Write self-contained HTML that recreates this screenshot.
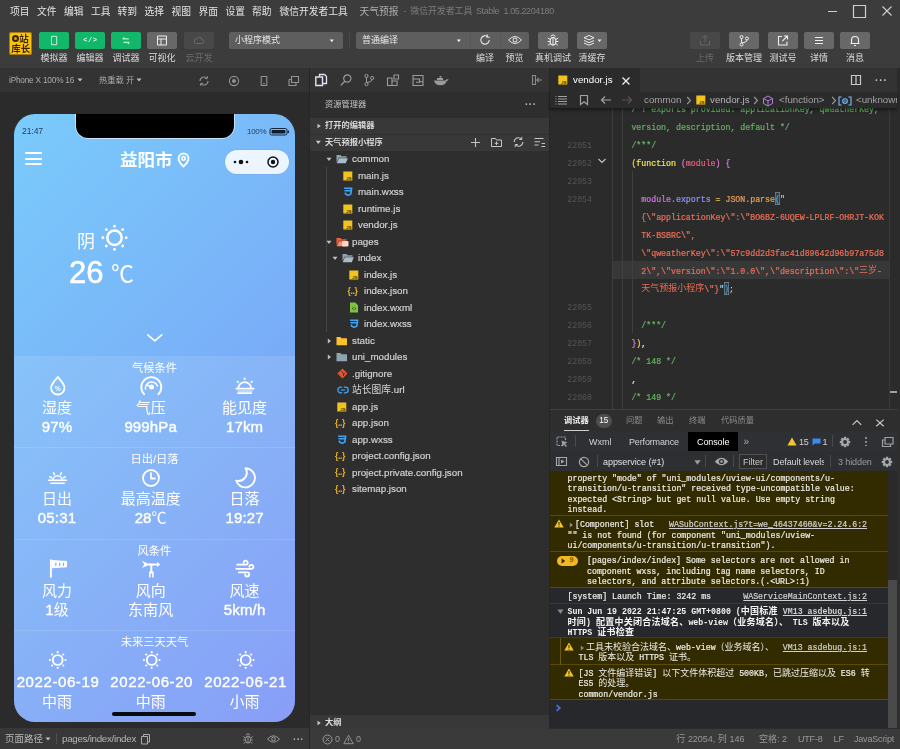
<!DOCTYPE html>
<html lang="zh"><head><meta charset="utf-8"><title>微信开发者工具</title><style>
html,body{margin:0;padding:0;}
body{width:900px;height:749px;overflow:hidden;background:#2b2b2b;font-family:"Liberation Sans","Noto Sans CJK SC",sans-serif;font-kerning:none;position:relative;}
#r{position:absolute;left:0;top:0;width:900px;height:749px;overflow:hidden;will-change:transform;}
#r div,#r span,#r svg{position:absolute;}
#r span{white-space:pre;}
#r span.h{font-family:"Liberation Sans","Noto Sans CJK SC",sans-serif;}
#r div.c{overflow:hidden;}
</style></head>
<body><div id="r">
<div style="left:0px;top:0px;width:900px;height:68px;background:#3c3c3c;"></div>
<span class="h" style="left:10.00px;top:4.58px;font-size:9.75px;line-height:13.65px;color:#e4e4e4;">项目</span>
<span class="h" style="left:37.00px;top:4.58px;font-size:9.75px;line-height:13.65px;color:#e4e4e4;">文件</span>
<span class="h" style="left:64.00px;top:4.58px;font-size:9.75px;line-height:13.65px;color:#e4e4e4;">编辑</span>
<span class="h" style="left:91.00px;top:4.58px;font-size:9.75px;line-height:13.65px;color:#e4e4e4;">工具</span>
<span class="h" style="left:117.50px;top:4.58px;font-size:9.75px;line-height:13.65px;color:#e4e4e4;">转到</span>
<span class="h" style="left:144.50px;top:4.58px;font-size:9.75px;line-height:13.65px;color:#e4e4e4;">选择</span>
<span class="h" style="left:171.50px;top:4.58px;font-size:9.75px;line-height:13.65px;color:#e4e4e4;">视图</span>
<span class="h" style="left:198.50px;top:4.58px;font-size:9.75px;line-height:13.65px;color:#e4e4e4;">界面</span>
<span class="h" style="left:225.50px;top:4.58px;font-size:9.75px;line-height:13.65px;color:#e4e4e4;">设置</span>
<span class="h" style="left:252.00px;top:4.58px;font-size:9.75px;line-height:13.65px;color:#e4e4e4;">帮助</span>
<span class="h" style="left:279.50px;top:4.58px;font-size:9.75px;line-height:13.65px;color:#e4e4e4;">微信开发者工具</span>
<span class="h" style="left:359.50px;top:4.58px;font-size:9.75px;line-height:13.65px;color:#adadad;">天气预报</span>
<span style="left:403.50px;top:5.10px;font-size:9px;line-height:12.6px;color:#7c7c7c;">-</span>
<span class="h" style="left:410.30px;top:5.10px;font-size:9px;line-height:12.6px;color:#7c7c7c;letter-spacing:-0.15px;">微信开发者工具</span>
<span style="left:476.00px;top:5.10px;font-size:9px;line-height:12.6px;color:#7c7c7c;letter-spacing:-0.4px;">Stable</span>
<span style="left:503.50px;top:5.10px;font-size:9px;line-height:12.6px;color:#7c7c7c;letter-spacing:-0.4px;">1.05.2204180</span>
<svg style="left:826px;top:4px;" width="70" height="16" viewBox="0 0 70 16"><path d="M2 7.5H11" stroke="#d0d0d0" stroke-width="1" fill="none" /><path d="M27.5 1.5H39.5V13.5H27.5Z" stroke="#d0d0d0" stroke-width="1.2" fill="none" /><path d="M56.5 2.5L65.5 11.5M65.5 2.5L56.5 11.5" stroke="#d0d0d0" stroke-width="1.1" fill="none" /></svg>
<div style="left:9px;top:32px;width:23px;height:23px;background:#fcc30b;border-radius:3px;box-shadow:0 0 0 1px #a87a08 inset;"></div>
<div style="left:11.8px;top:34.8px;width:7.4px;height:7.4px;background:#3a2400;border-radius:4px;"></div>
<div style="left:13.7px;top:36.7px;width:3.6px;height:3.6px;background:#d8a010;border-radius:2px;"></div>
<span class="h" style="left:19.30px;top:32.05px;font-size:9.5px;line-height:13.3px;color:#3a2400;font-weight:700;">站</span>
<span class="h" style="left:11.30px;top:41.65px;font-size:9.5px;line-height:13.3px;color:#3a2400;font-weight:700;">库长</span>
<div style="left:39px;top:32px;width:30px;height:16.5px;background:#12b76a;border-radius:2px;"></div>
<span class="h" style="left:40.50px;top:51.70px;font-size:9px;line-height:12.6px;color:#dcdcdc;">模拟器</span>
<div style="left:75px;top:32px;width:30px;height:16.5px;background:#12b76a;border-radius:2px;"></div>
<span class="h" style="left:76.50px;top:51.70px;font-size:9px;line-height:12.6px;color:#dcdcdc;">编辑器</span>
<div style="left:111px;top:32px;width:30px;height:16.5px;background:#12b76a;border-radius:2px;"></div>
<span class="h" style="left:112.50px;top:51.70px;font-size:9px;line-height:12.6px;color:#dcdcdc;">调试器</span>
<div style="left:147px;top:32px;width:30px;height:16.5px;background:#686868;border-radius:2px;"></div>
<span class="h" style="left:148.50px;top:51.70px;font-size:9px;line-height:12.6px;color:#dcdcdc;">可视化</span>
<div style="left:184px;top:32px;width:30px;height:16.5px;background:#484848;border-radius:2px;"></div>
<span class="h" style="left:185.50px;top:51.70px;font-size:9px;line-height:12.6px;color:#6a6a6a;">云开发</span>
<svg style="left:39px;top:32px;" width="30" height="17" viewBox="0 0 30 17"><path d="M12.500 4.300h5.200v8.400h-5.200z" stroke="#d8f8e8" stroke-width="0.9" fill="none" stroke-linejoin="round"/></svg>
<span style="left:83.25px;top:36.40px;font-size:7px;line-height:9.8px;color:#d8f8e8;font-family:'Liberation Mono',monospace;font-weight:700;letter-spacing:0.5px;">&lt;/&gt;</span>
<svg style="left:111px;top:32px;" width="30" height="17" viewBox="0 0 30 17"><path d="M17.800 6.900h-6M13.300 5.300l-1.600 1.600M12.300 10.400h6M16.800 12l1.600-1.600" stroke="#b4f0d2" stroke-width="1.2" fill="none" /></svg>
<svg style="left:147px;top:32px;" width="30" height="17" viewBox="0 0 30 17"><path d="M10.5 4h9v9h-9zM10.5 7h9M14 7v6" stroke="#eee" stroke-width="1" fill="none" /></svg>
<svg style="left:184px;top:32px;" width="30" height="17" viewBox="0 0 30 17"><path d="M12.5 11.5a2.3 2.3 0 0 1 .3-4.6a2.6 2.6 0 0 1 5 .6a2 2 0 0 1 -.3 4z" stroke="#6a6a6a" stroke-width="1" fill="none" /></svg>
<div style="left:229px;top:32px;width:114px;height:16.5px;background:#5e5e5e;border-radius:2px;"></div>
<span class="h" style="left:235.00px;top:34.20px;font-size:9px;line-height:12.6px;color:#e8e8e8;">小程序模式</span>
<svg style="left:329px;top:38.5px;" width="6" height="4" viewBox="0 0 6 4"><path d="M.8 .6h4l-2 2.600z" fill="#eee"/></svg>
<div style="left:349px;top:33px;width:1px;height:15px;background:#4a4a4a;"></div>
<div style="left:356px;top:32px;width:173px;height:16.5px;background:#5e5e5e;border-radius:2px;"></div>
<span class="h" style="left:362.00px;top:34.20px;font-size:9px;line-height:12.6px;color:#e8e8e8;">普通编译</span>
<svg style="left:456px;top:38.5px;" width="6" height="4" viewBox="0 0 6 4"><path d="M.8 .6h4l-2 2.600z" fill="#eee"/></svg>
<div style="left:470px;top:32px;width:1px;height:16.5px;background:#585858;"></div>
<div style="left:499.5px;top:32px;width:1px;height:16.5px;background:#585858;"></div>
<svg style="left:478px;top:33px;" width="14" height="14" viewBox="0 0 14 14"><path d="M11.2 7a4.2 4.2 0 1 1 -1.5 -3.2" stroke="#e6e6e6" stroke-width="1.1" fill="none" /><path d="M9.2 1.6v2.6h2.6" stroke="#e6e6e6" stroke-width="1.1" fill="none" /></svg>
<svg style="left:507px;top:34px;" width="16" height="12" viewBox="0 0 16 12"><path d="M1.5 6q6.5 -7 13 0q-6.5 7 -13 0z" stroke="#e6e6e6" stroke-width="1" fill="none" /><circle cx="8" cy="6" r="2" fill="none" stroke="#e6e6e6"/></svg>
<span class="h" style="left:476.00px;top:51.70px;font-size:9px;line-height:12.6px;color:#dcdcdc;">编译</span>
<span class="h" style="left:505.50px;top:51.70px;font-size:9px;line-height:12.6px;color:#dcdcdc;">预览</span>
<div style="left:538px;top:32px;width:30px;height:16.5px;background:#686868;border-radius:2px;"></div>
<svg style="left:545px;top:33px;" width="16" height="15" viewBox="0 0 16 15"><ellipse cx="8" cy="8.3" rx="2.8" ry="3.8" fill="none" stroke="#eee" stroke-width="1.1"/><path d="M8 4.5v7.6M6 3.6a2 1.6 0 0 1 4 0M5.2 6.5l-2.4-1.5M10.8 6.5l2.4-1.5M5.2 8.5h-2.6M10.8 8.5h2.6M5.4 10.5l-2.3 1.7M10.6 10.5l2.3 1.7" stroke="#eee" stroke-width="1" fill="none" /></svg>
<span class="h" style="left:535.00px;top:51.70px;font-size:9px;line-height:12.6px;color:#dcdcdc;">真机调试</span>
<div style="left:577px;top:32px;width:30px;height:16.5px;background:#686868;border-radius:2px;"></div>
<svg style="left:580px;top:33px;" width="26" height="15" viewBox="0 0 26 15"><path d="M9 2.5l5 2.2l-5 2.2l-5-2.2zM4 7.5l5 2.2l5-2.2M4 10l5 2.2l5-2.2" stroke="#eee" stroke-width="1" fill="none" /><path d="M17.5 6.5h4l-2 2.5z" fill="#eee"/></svg>
<span class="h" style="left:578.50px;top:51.70px;font-size:9px;line-height:12.6px;color:#dcdcdc;">清缓存</span>
<div style="left:690px;top:32px;width:30px;height:16.5px;background:#484848;border-radius:2px;"></div>
<svg style="left:697px;top:33px;" width="16" height="15" viewBox="0 0 16 15"><path d="M8 2.5v7M5.5 5l2.5-2.5l2.5 2.5M3.5 8v4h9v-4" stroke="#666" stroke-width="1" fill="none" /></svg>
<span class="h" style="left:696.00px;top:51.70px;font-size:9px;line-height:12.6px;color:#666;">上传</span>
<div style="left:729px;top:32px;width:30px;height:16.5px;background:#686868;border-radius:2px;"></div>
<svg style="left:736px;top:33px;" width="16" height="15" viewBox="0 0 16 15"><circle cx="5.5" cy="4" r="1.5" fill="none" stroke="#eee"/><circle cx="5.5" cy="11.5" r="1.5" fill="none" stroke="#eee"/><circle cx="11" cy="5.5" r="1.5" fill="none" stroke="#eee"/><path d="M5.5 5.5v4.5M11 7q0 2.5-5 3" stroke="#eee" stroke-width="1" fill="none" /></svg>
<span class="h" style="left:726.00px;top:51.70px;font-size:9px;line-height:12.6px;color:#dcdcdc;">版本管理</span>
<div style="left:768px;top:32px;width:30px;height:16.5px;background:#686868;border-radius:2px;"></div>
<svg style="left:775px;top:33px;" width="16" height="15" viewBox="0 0 16 15"><path d="M7 3.5h-3.500v8.500h8.500v-3.500M9 3h3.500v3.500M12.300 3.200l-5 5" stroke="#eee" stroke-width="1.1" fill="none" /></svg>
<span class="h" style="left:769.50px;top:51.70px;font-size:9px;line-height:12.6px;color:#dcdcdc;">测试号</span>
<div style="left:804px;top:32px;width:30px;height:16.5px;background:#686868;border-radius:2px;"></div>
<svg style="left:811px;top:33px;" width="16" height="15" viewBox="0 0 16 15"><path d="M4 4.5h8M4 7.5h8M4 10.5h8" stroke="#eee" stroke-width="1.2" fill="none" /></svg>
<span class="h" style="left:810.00px;top:51.70px;font-size:9px;line-height:12.6px;color:#dcdcdc;">详情</span>
<div style="left:840px;top:32px;width:30px;height:16.5px;background:#686868;border-radius:2px;"></div>
<svg style="left:847px;top:33px;" width="16" height="15" viewBox="0 0 16 15"><path d="M4.5 10.5v-3.500a3.500 3.500 0 0 1 7 0v3.500zM3.500 10.500h9M7 12.500h2" stroke="#eee" stroke-width="1.1" fill="none" /></svg>
<span class="h" style="left:846.00px;top:51.70px;font-size:9px;line-height:12.6px;color:#dcdcdc;">消息</span>
<div style="left:0px;top:68px;width:309px;height:24px;background:#333333;"></div>
<div style="left:0px;top:92px;width:309px;height:636px;background:#2b2b2b;"></div>
<div style="left:309px;top:68px;width:1px;height:681px;background:#262626;"></div>
<span style="left:9.00px;top:75.02px;font-size:8.25px;line-height:11.55px;color:#ababab;letter-spacing:-0.2px;">iPhone X 100% 16</span>
<svg style="left:77px;top:78px;" width="6" height="4" viewBox="0 0 6 4"><path d="M.5 .5h5l-2.5 3z" fill="#bdbdbd"/></svg>
<span class="h" style="left:99.00px;top:74.52px;font-size:8.25px;line-height:11.55px;color:#ababab;">热重载</span>
<span style="left:123.75px;top:74.52px;font-size:8.25px;line-height:11.55px;color:#ababab;"> </span>
<span class="h" style="left:126.04px;top:74.52px;font-size:8.25px;line-height:11.55px;color:#ababab;">开</span>
<svg style="left:136px;top:78px;" width="6" height="4" viewBox="0 0 6 4"><path d="M.5 .5h5l-2.5 3z" fill="#bdbdbd"/></svg>
<svg style="left:198px;top:74.7px;" width="12" height="12" viewBox="0 0 12 12"><path d="M2 6a4 4 0 0 1 7-2.6M10 6a4 4 0 0 1 -7 2.6" stroke="#929292" stroke-width="1.1" fill="none" /><path d="M9.3 1.2v2.4h-2.4M2.7 10.8v-2.4h2.4" stroke="#929292" stroke-width="1" fill="none" /></svg>
<svg style="left:228px;top:74.7px;" width="12" height="12" viewBox="0 0 12 12"><circle cx="6" cy="6" r="4.6" fill="none" stroke="#929292" stroke-width="1.1"/><circle cx="6" cy="6" r="2" fill="#929292"/></svg>
<svg style="left:258px;top:74.7px;" width="12" height="12" viewBox="0 0 12 12"><path d="M3.2 1.5h5.6v9h-5.6zM5 8.8h2" stroke="#929292" stroke-width="1.1" fill="none" stroke-linejoin="round"/></svg>
<svg style="left:287px;top:74.7px;" width="14" height="12" viewBox="0 0 14 12"><path d="M4.5 1.5h7v6h-7zM2 4.5h2.5M2 4.5v6h7v-3" stroke="#929292" stroke-width="1.1" fill="none" /></svg>
<div class="c" id="ph" style="left:14px;top:114px;width:281px;height:608px;border-radius:21px;background:linear-gradient(135deg,#7acbfb 0%,#79b0f8 50%,#7a92f6 100%);"><div style="left:0;top:242px;width:281px;height:366px;background:rgba(255,255,255,0.11)"></div><div style="left:0;top:333.3px;width:281px;height:1px;background:rgba(255,255,255,0.13)"></div><div style="left:0;top:424.79999999999995px;width:281px;height:1px;background:rgba(255,255,255,0.13)"></div><div style="left:0;top:516.3px;width:281px;height:1px;background:rgba(255,255,255,0.13)"></div><div style="left:62px;top:-10px;width:157.500px;height:33.700px;background:#000;border-radius:0 0 12px 12px;box-shadow:0 0 0 .7px rgba(255,255,255,.75)"></div></div>
<span style="left:22.00px;top:124.98px;font-size:8.6px;line-height:12.04px;color:#1d3d5c;letter-spacing:-0.1px;">21:47</span>
<span style="left:247.00px;top:125.90px;font-size:8px;line-height:11.2px;color:#1d3d5c;letter-spacing:-0.3px;">100%</span>
<svg style="left:269px;top:127px;" width="22" height="10" viewBox="0 0 22 10"><rect x="1" y="1.5" width="17" height="6.5" rx="1.6" fill="none" stroke="#14283c" stroke-width="1"/><rect x="2.6" y="3.1" width="13.8" height="3.3" rx=".6" fill="#101c2c"/><rect x="18.6" y="3.6" width="1.4" height="2.4" fill="#14283c"/></svg>
<div style="left:25px;top:152.0px;width:17px;height:2px;background:#fff;border-radius:1px;"></div>
<div style="left:25px;top:157.5px;width:17px;height:2px;background:#fff;border-radius:1px;"></div>
<div style="left:25px;top:163.0px;width:17px;height:2px;background:#fff;border-radius:1px;"></div>
<span class="h" style="left:120.00px;top:147.75px;font-size:17.5px;line-height:24.5px;color:#fff;font-weight:700;">益阳市</span>
<svg style="left:175.5px;top:152px;" width="16" height="17" viewBox="0 0 16 17"><g transform="scale(1.12) translate(-.3 -.2)"><path d="M7 1.5a4.4 4.4 0 0 0 -4.4 4.4c0 3 4.4 7.2 4.4 7.2s4.4-4.2 4.4-7.2a4.400 4.400 0 0 0 -4.400-4.400z" fill="none" stroke="#fff" stroke-opacity=".95" stroke-width="1.700"/><circle cx="7" cy="5.900" r="1.500" fill="none" stroke="#fff" stroke-opacity=".95" stroke-width="1.500"/></g></svg>
<div style="left:225px;top:150px;width:64px;height:23.5px;background:rgba(255,255,255,0.86);border-radius:12px;box-shadow:0 0 0 .5px rgba(120,140,180,.35);"></div>
<svg style="left:231px;top:156px;" width="22" height="12" viewBox="0 0 22 12"><circle cx="4" cy="6" r="1.3" fill="#111"/><circle cx="10" cy="6" r="2.3" fill="#111"/><circle cx="16" cy="6" r="1.3" fill="#111"/></svg>
<svg style="left:266px;top:155px;" width="14" height="14" viewBox="0 0 14 14"><circle cx="7" cy="7" r="5" fill="none" stroke="#111" stroke-width="1.5"/><circle cx="7" cy="7" r="2.200" fill="#111"/></svg>
<span class="h" style="left:77.00px;top:229.90px;font-size:18px;line-height:25.2px;color:#fff;">阴</span>
<svg style="left:100px;top:223px;" width="28" height="28" viewBox="0 0 28 28"><circle cx="14.5" cy="14.8" r="7.2" fill="none" stroke="#fff" stroke-width="2.5"/><circle cx="26.10" cy="14.80" r="1.45" fill="#fff"/><circle cx="22.70" cy="23.00" r="1.45" fill="#fff"/><circle cx="14.50" cy="26.40" r="1.45" fill="#fff"/><circle cx="6.30" cy="23.00" r="1.45" fill="#fff"/><circle cx="2.90" cy="14.80" r="1.45" fill="#fff"/><circle cx="6.30" cy="6.60" r="1.45" fill="#fff"/><circle cx="14.50" cy="3.20" r="1.45" fill="#fff"/><circle cx="22.70" cy="6.60" r="1.45" fill="#fff"/></svg>
<span style="left:69.00px;top:251.30px;font-size:31px;line-height:43.4px;color:#fff;-webkit-text-stroke:.55px #fff;">26</span>
<span class="h" style="left:111.00px;top:257.90px;font-size:23px;line-height:32.2px;color:#fff;">℃</span>
<svg style="left:146px;top:333px;" width="18" height="10" viewBox="0 0 18 10"><path d="M1.800 1.800l7 6l7-6" stroke="#fff" stroke-width="1.7" fill="none" stroke-linecap="round" stroke-linejoin="round"/></svg>
<span class="h" style="left:132.00px;top:360.73px;font-size:11.25px;line-height:15.75px;color:#fff;">气候条件</span>
<span class="h" style="left:42.00px;top:396.50px;font-size:15px;line-height:21.0px;color:#fff;">湿度</span>
<span style="left:41.76px;top:415.80px;font-size:15px;line-height:21.0px;color:#fff;letter-spacing:0.15px;-webkit-text-stroke:.4px #fff;">97%</span>
<span class="h" style="left:135.70px;top:396.50px;font-size:15px;line-height:21.0px;color:#fff;">气压</span>
<span style="left:124.39px;top:415.80px;font-size:15px;line-height:21.0px;color:#fff;letter-spacing:0.15px;-webkit-text-stroke:.4px #fff;">999hPa</span>
<span class="h" style="left:222.10px;top:396.50px;font-size:15px;line-height:21.0px;color:#fff;">能见度</span>
<span style="left:225.96px;top:415.80px;font-size:15px;line-height:21.0px;color:#fff;letter-spacing:0.15px;-webkit-text-stroke:.4px #fff;">17km</span>
<span class="h" style="left:130.44px;top:452.23px;font-size:11.25px;line-height:15.75px;color:#fff;">日出</span>
<span style="left:152.94px;top:452.23px;font-size:11.25px;line-height:15.75px;color:#fff;">/</span>
<span class="h" style="left:156.06px;top:452.23px;font-size:11.25px;line-height:15.75px;color:#fff;">日落</span>
<span class="h" style="left:42.00px;top:488.00px;font-size:15px;line-height:21.0px;color:#fff;">日出</span>
<span style="left:37.86px;top:507.30px;font-size:15px;line-height:21.0px;color:#fff;letter-spacing:0.15px;-webkit-text-stroke:.4px #fff;">05:31</span>
<span class="h" style="left:120.70px;top:488.00px;font-size:15px;line-height:21.0px;color:#fff;">最高温度</span>
<span style="left:134.63px;top:507.30px;font-size:15px;line-height:21.0px;color:#fff;letter-spacing:0.15px;-webkit-text-stroke:.4px #fff;">28</span>
<span class="h" style="left:151.62px;top:507.30px;font-size:15px;line-height:21.0px;color:#fff;">℃</span>
<span class="h" style="left:229.60px;top:488.00px;font-size:15px;line-height:21.0px;color:#fff;">日落</span>
<span style="left:225.46px;top:507.30px;font-size:15px;line-height:21.0px;color:#fff;letter-spacing:0.15px;-webkit-text-stroke:.4px #fff;">19:27</span>
<span class="h" style="left:137.62px;top:543.73px;font-size:11.25px;line-height:15.75px;color:#fff;">风条件</span>
<span class="h" style="left:42.00px;top:579.50px;font-size:15px;line-height:21.0px;color:#fff;">风力</span>
<span style="left:45.18px;top:598.80px;font-size:15px;line-height:21.0px;color:#fff;letter-spacing:0.15px;-webkit-text-stroke:.4px #fff;">1</span>
<span class="h" style="left:53.67px;top:598.80px;font-size:15px;line-height:21.0px;color:#fff;">级</span>
<span class="h" style="left:135.70px;top:579.50px;font-size:15px;line-height:21.0px;color:#fff;">风向</span>
<span class="h" style="left:127.97px;top:598.80px;font-size:15px;line-height:21.0px;color:#fff;letter-spacing:0.15px;">东南风</span>
<span class="h" style="left:229.60px;top:579.50px;font-size:15px;line-height:21.0px;color:#fff;">风速</span>
<span style="left:223.80px;top:598.80px;font-size:15px;line-height:21.0px;color:#fff;letter-spacing:0.15px;-webkit-text-stroke:.4px #fff;">5km/h</span>
<span class="h" style="left:120.75px;top:635.12px;font-size:11.25px;line-height:15.75px;color:#fff;">未来三天天气</span>
<span style="left:16.64px;top:670.50px;font-size:15px;line-height:21.0px;color:#fff;letter-spacing:0.6px;-webkit-text-stroke:.4px #fff;">2022-06-19</span>
<span class="h" style="left:42.00px;top:691.00px;font-size:15px;line-height:21.0px;color:#fff;">中雨</span>
<svg style="left:47px;top:650px;" width="20" height="20" viewBox="0 0 20 20"><circle cx="10.7" cy="10" r="4.9" fill="none" stroke="#fff" stroke-width="1.9"/><circle cx="18.50" cy="10.00" r="1.1" fill="#fff"/><circle cx="16.22" cy="15.52" r="1.1" fill="#fff"/><circle cx="10.70" cy="17.80" r="1.1" fill="#fff"/><circle cx="5.18" cy="15.52" r="1.1" fill="#fff"/><circle cx="2.90" cy="10.00" r="1.1" fill="#fff"/><circle cx="5.18" cy="4.48" r="1.1" fill="#fff"/><circle cx="10.70" cy="2.20" r="1.1" fill="#fff"/><circle cx="16.22" cy="4.48" r="1.1" fill="#fff"/></svg>
<span style="left:110.34px;top:670.50px;font-size:15px;line-height:21.0px;color:#fff;letter-spacing:0.6px;-webkit-text-stroke:.4px #fff;">2022-06-20</span>
<span class="h" style="left:135.70px;top:691.00px;font-size:15px;line-height:21.0px;color:#fff;">中雨</span>
<svg style="left:140.7px;top:650px;" width="20" height="20" viewBox="0 0 20 20"><circle cx="10.7" cy="10" r="4.9" fill="none" stroke="#fff" stroke-width="1.9"/><circle cx="18.50" cy="10.00" r="1.1" fill="#fff"/><circle cx="16.22" cy="15.52" r="1.1" fill="#fff"/><circle cx="10.70" cy="17.80" r="1.1" fill="#fff"/><circle cx="5.18" cy="15.52" r="1.1" fill="#fff"/><circle cx="2.90" cy="10.00" r="1.1" fill="#fff"/><circle cx="5.18" cy="4.48" r="1.1" fill="#fff"/><circle cx="10.70" cy="2.20" r="1.1" fill="#fff"/><circle cx="16.22" cy="4.48" r="1.1" fill="#fff"/></svg>
<span style="left:204.24px;top:670.50px;font-size:15px;line-height:21.0px;color:#fff;letter-spacing:0.6px;-webkit-text-stroke:.4px #fff;">2022-06-21</span>
<span class="h" style="left:229.60px;top:691.00px;font-size:15px;line-height:21.0px;color:#fff;">小雨</span>
<svg style="left:234.6px;top:650px;" width="20" height="20" viewBox="0 0 20 20"><circle cx="10.7" cy="10" r="4.9" fill="none" stroke="#fff" stroke-width="1.9"/><circle cx="18.50" cy="10.00" r="1.1" fill="#fff"/><circle cx="16.22" cy="15.52" r="1.1" fill="#fff"/><circle cx="10.70" cy="17.80" r="1.1" fill="#fff"/><circle cx="5.18" cy="15.52" r="1.1" fill="#fff"/><circle cx="2.90" cy="10.00" r="1.1" fill="#fff"/><circle cx="5.18" cy="4.48" r="1.1" fill="#fff"/><circle cx="10.70" cy="2.20" r="1.1" fill="#fff"/><circle cx="16.22" cy="4.48" r="1.1" fill="#fff"/></svg>
<div style="left:112px;top:712px;width:84px;height:4px;background:#0a0a0a;border-radius:2px;"></div>
<svg style="left:47px;top:375px;" width="22" height="22" viewBox="0 0 22 22"><path d="M10.8 2c3.200 3.700 6.700 7 6.700 10.800a6.700 6.700 0 0 1 -13.400 0c0-3.800 3.500-7.100 6.700-10.800z" stroke="#fff" stroke-width="1.8" fill="none" stroke-linejoin="round"/><text x="10.800" y="15.600" font-size="6.500" font-weight="700" fill="#fff" text-anchor="middle" font-family="Liberation Sans">%</text></svg>
<svg style="left:139px;top:374px;" width="24" height="24" viewBox="0 0 24 24"><path d="M5.200 20.200a10 10 0 1 1 14.200 0" stroke="#fff" stroke-width="1.9" fill="none" stroke-linecap="round"/><path d="M6.500 15.200a6.200 6.200 0 0 1 11.900-3.200" stroke="#fff" stroke-width="1.5" fill="none" stroke-linecap="round"/><circle cx="12.500" cy="12.900" r="2.500" fill="#fff"/><path d="M7.800 11l4.500 1.800" stroke="#fff" stroke-width="1.8" fill="none" stroke-linecap="round"/></svg>
<svg style="left:232px;top:375px;" width="26" height="22" viewBox="0 0 26 22"><path d="M6.400 13.400a6.300 6.300 0 0 1 12.600 0" stroke="#fff" stroke-width="1.7" fill="none" /><path d="M4.400 13.700h17.200M6 18.200h13.400" stroke="#fff" stroke-width="1.7" fill="none" stroke-linecap="round"/><path d="M5.500 16h15" stroke="#fff" stroke-width="1.2" fill="none" opacity=".75"/><circle cx="12.700" cy="3.800" r="1.150" fill="#fff"/><circle cx="5.800" cy="6.800" r="1.150" fill="#fff"/><circle cx="19.700" cy="6.800" r="1.150" fill="#fff"/></svg>
<svg style="left:44px;top:467px;" width="26" height="20" viewBox="0 0 26 20"><path d="M8.900 13.300a4.600 4.600 0 0 1 9.200 0" stroke="#fff" stroke-width="1.6" fill="none" /><path d="M4.700 13.300h17.700M6.900 16.200h13.300" stroke="#fff" stroke-width="1.6" fill="none" stroke-linecap="round"/><path d="M16.60 7.47L17.40 5.970M10.400 7.470L9.600 5.970M19.530 10.620L21.080 9.920M7.470 10.620L5.920 9.920" stroke="#fff" stroke-width="1.7" fill="none" stroke-linecap="round"/></svg>
<svg style="left:141px;top:467.5px;" width="20" height="20" viewBox="0 0 20 20"><circle cx="10" cy="10" r="8" fill="none" stroke="#fff" stroke-width="1.800"/><path d="M10 5.200v5.300h4" stroke="#fff" stroke-width="1.8" fill="none" stroke-linecap="round" stroke-linejoin="round"/></svg>
<svg style="left:234px;top:467px;" width="24" height="22" viewBox="0 0 24 22"><path d="M11.500 1.200a9.600 9.600 0 1 1 -9.300 12.500a8.400 8.400 0 0 0 9.300-12.500z" stroke="#fff" stroke-width="1.9" fill="none" stroke-linejoin="round"/></svg>
<svg style="left:47px;top:558px;" width="22" height="22" viewBox="0 0 22 22"><path d="M3.900 2.200v16.700" stroke="#fff" stroke-width="1.9" fill="none" stroke-linecap="round"/><path d="M4.800 2l15.200 1v6.200l-15.200 1z" fill="#fff"/><rect x="8.2" y="4.700" width="1.300" height="3.200" fill="#86b2f8"/><rect x="12" y="4.700" width="1.300" height="3.200" fill="#86b2f8"/><rect x="15.8" y="4.700" width="1.300" height="3.200" fill="#86b2f8"/></svg>
<svg style="left:139px;top:557px;" width="24" height="24" viewBox="0 0 24 24"><path d="M2.800 3.800l6 2.600h9.200v-1.500l3.300 2.500l-3.300 2.500v-1.500h-9.200l-6 2.600l2.600-3.600z" fill="#fff"/><path d="M11.300 7.400h2v7h1.400v6.100h-1.500v-4h-1.600v4h-1.500v-6.100h1.200z" fill="#fff"/></svg>
<svg style="left:234px;top:559px;" width="22" height="20" viewBox="0 0 22 20"><path d="M3.200 5.700h8.500a2 2 0 1 0 -2-2M2.400 9.800h15a2 2 0 1 0 -2-2M4.900 13.400h8.300a2 2 0 1 1 -2 2" stroke="#fff" stroke-width="1.8" fill="none" stroke-linecap="round"/></svg>
<div style="left:0px;top:728px;width:309px;height:21px;background:#383838;"></div>
<span class="h" style="left:5.00px;top:731.85px;font-size:9.5px;line-height:13.3px;color:#b6b6b6;">页面路径</span>
<svg style="left:45px;top:737px;" width="6" height="4" viewBox="0 0 6 4"><path d="M.5 .5h5l-2.500 3z" fill="#bdbdbd"/></svg>
<div style="left:56px;top:733px;width:1px;height:11px;background:#505050;"></div>
<span style="left:62.00px;top:731.67px;font-size:9.75px;line-height:13.65px;color:#b8b8b8;letter-spacing:-0.27px;">pages/index/index</span>
<svg style="left:140px;top:733px;" width="11" height="12" viewBox="0 0 11 12"><path d="M1.500 3.500h6v7.500h-6zM3.500 3.500v-2h6v7.500h-2" stroke="#aaa" stroke-width="1" fill="none" /></svg>
<svg style="left:241px;top:732px;" width="14" height="14" viewBox="0 0 14 14"><ellipse cx="7" cy="7.600" rx="2.600" ry="3.600" fill="none" stroke="#999"/><path d="M7 4v7.200M5.200 3.200a1.800 1.400 0 0 1 3.600 0M4.400 6l-2.200-1.400M9.600 6l2.200-1.400M4.400 8h-2.400M9.600 8h2.400M4.600 10l-2.100 1.600M9.400 10l2.100 1.600" stroke="#999" stroke-width="0.9" fill="none" /></svg>
<svg style="left:266px;top:733px;" width="15" height="12" viewBox="0 0 15 12"><path d="M1.500 6q6-6.500 12 0q-6 6.500-12 0z" stroke="#999" stroke-width="1" fill="none" /><circle cx="7.500" cy="6" r="1.800" fill="none" stroke="#999"/></svg>
<span style="left:293.00px;top:733.00px;font-size:10px;line-height:14.0px;color:#aaa;font-weight:700;letter-spacing:0.3px;">···</span>
<div style="left:310px;top:68px;width:238.5px;height:24px;background:#333333;"></div>
<div style="left:310px;top:92px;width:238.5px;height:623px;background:#2e2e2e;"></div>
<div style="left:548.5px;top:68px;width:1px;height:661px;background:#262626;"></div>
<svg style="left:314px;top:73px;" width="14" height="14" viewBox="0 0 14 14"><path d="M5.500 3.500v-2h5l2 2v7h-3.500" stroke="#e8e0f0" stroke-width="1.3" fill="none" /><path d="M1.800 4h6.700v8.500h-6.700z" stroke="#e8e0f0" stroke-width="1.4" fill="none" /></svg>
<svg style="left:339px;top:73px;" width="14" height="14" viewBox="0 0 14 14"><circle cx="8.300" cy="5.500" r="3.600" fill="none" stroke="#9c9c9c" stroke-width="1.200"/><path d="M5.800 8.200l-4 4.200" stroke="#9c9c9c" stroke-width="1.3" fill="none" /></svg>
<svg style="left:362px;top:73px;" width="14" height="14" viewBox="0 0 14 14"><circle cx="4.500" cy="3" r="1.600" fill="none" stroke="#9c9c9c"/><circle cx="4.500" cy="11.200" r="1.600" fill="none" stroke="#9c9c9c"/><circle cx="10.200" cy="5" r="1.600" fill="none" stroke="#9c9c9c"/><path d="M4.500 4.600v5M10.200 6.600q0 2.400-5.500 3" stroke="#9c9c9c" stroke-width="1" fill="none" /></svg>
<svg style="left:386px;top:73px;" width="14" height="14" viewBox="0 0 14 14"><path d="M1.500 5h4.500v7.500h-4.500zM6 8h5v4.500h-5M8 2h4.500v4h-4.500z" stroke="#9c9c9c" stroke-width="1.1" fill="none" /></svg>
<svg style="left:411px;top:73px;" width="14" height="14" viewBox="0 0 14 14"><path d="M2 2.500h10v10h-10zM2 6h6.500v3.200h-3.500M12 8.800h-3.200" stroke="#9c9c9c" stroke-width="1.1" fill="none" /></svg>
<svg style="left:433px;top:73px;" width="17" height="14" viewBox="0 0 17 14"><path d="M1 7.500h11.500c.6-1.200 1.800-1.600 3-1.200c-.2 1-1 1.700-2 1.900c-.6 2.500-2.800 4-6 4c-3.800 0-6-1.600-6.500-4.700z" fill="#9a9a9a"/><rect x="4" y="5" width="6" height="2" fill="#9a9a9a"/><rect x="6.500" y="3" width="2" height="1.600" fill="#9a9a9a"/></svg>
<svg style="left:530px;top:74px;" width="14" height="12" viewBox="0 0 14 12"><path d="M2.500 1.500v9h3v-9zM12 6h-5M9 3.800l-2.200 2.200l2.200 2.200" stroke="#8a8a8a" stroke-width="1.1" fill="none" /></svg>
<span class="h" style="left:325.00px;top:98.72px;font-size:8.25px;line-height:11.55px;color:#c4c4c4;">资源管理器</span>
<span style="left:525.00px;top:98.30px;font-size:10px;line-height:14.0px;color:#bbb;font-weight:700;letter-spacing:0.5px;">···</span>
<div style="left:310px;top:118px;width:238.5px;height:32.5px;background:#383838;"></div>
<div style="left:310px;top:134px;width:238.5px;height:0.6px;background:#303030;"></div>
<svg style="left:316px;top:123px;" width="6" height="6" viewBox="0 0 6 6"><path d="M1.500 .8l3.300 2.200l-3.300 2.200z" fill="#c8c8c8"/></svg>
<svg style="left:315px;top:140px;" width="7" height="5" viewBox="0 0 7 5"><path d="M.8 .8h5l-2.500 3.300z" fill="#c8c8c8"/></svg>
<span class="h" style="left:325.00px;top:120.22px;font-size:8.25px;line-height:11.55px;color:#d8d8d8;font-weight:700;">打开的编辑器</span>
<span class="h" style="left:325.00px;top:136.72px;font-size:8.25px;line-height:11.55px;color:#d8d8d8;font-weight:700;">天气预报小程序</span>
<svg style="left:470px;top:137px;" width="11" height="11" viewBox="0 0 11 11"><path d="M5.500 1v9M1 5.500h9" stroke="#c4c4c4" stroke-width="1.1" fill="none" /></svg>
<svg style="left:490px;top:136px;" width="13" height="12" viewBox="0 0 13 12"><path d="M1.500 2.500h4l1 1.500h5v6.500h-10zM6.500 5.500v3.600M4.700 7.300h3.600" stroke="#c4c4c4" stroke-width="1" fill="none" /></svg>
<svg style="left:512px;top:136px;" width="13" height="12" viewBox="0 0 13 12"><path d="M2.200 6a4.200 4.200 0 0 1 7.400-2.700M10.800 6a4.200 4.200 0 0 1 -7.400 2.700" stroke="#c4c4c4" stroke-width="1.1" fill="none" /><path d="M9.800 .9v2.600h-2.600M3.200 11.100v-2.600h2.600" stroke="#c4c4c4" stroke-width="1" fill="none" /></svg>
<svg style="left:533px;top:136px;" width="13" height="12" viewBox="0 0 13 12"><path d="M1.500 2.500h9M1.500 5.800h5.500M1.500 9h4M8.500 7.500h3.500M8.500 10.500h3.500" stroke="#c4c4c4" stroke-width="1.1" fill="none" /></svg>
<div style="left:326px;top:167px;width:0.7px;height:165px;background:#454545;"></div>
<svg style="left:326px;top:157.0px;" width="6" height="5" viewBox="0 0 6 5"><path d="M.5 .8h5l-2.500 3.200z" fill="#c0c0c0"/></svg>
<svg style="left:336px;top:154.0px;" width="12" height="10" viewBox="0 0 12 10"><path d="M.5 1h4l1 1.300h5v1.500h-8l-2 5z" fill="#8fa4b0"/><path d="M2.800 4.300h9l-2 5h-9z" fill="#a9bcc7"/></svg>
<span style="left:352.00px;top:152.18px;font-size:9.75px;line-height:13.65px;color:#d2d2d2;-webkit-text-stroke:.18px;">common</span>
<svg style="left:343px;top:170.5px;" width="10" height="10" viewBox="0 0 10 10"><rect x=".3" y=".5" width="9" height="9" fill="#f2c31c"/><text x="8.600" y="8.500" font-size="4.400" font-weight="700" text-anchor="end" fill="#3a2e00" font-family="Liberation Sans">JS</text></svg>
<span style="left:358.00px;top:168.68px;font-size:9.75px;line-height:13.65px;color:#d2d2d2;-webkit-text-stroke:.18px;">main.js</span>
<svg style="left:343px;top:187.0px;" width="10" height="10" viewBox="0 0 10 10"><path d="M1 .6h8.500l-.9 7l-3.400 1.700l-3.400-1.700l-.25-2h1.600l.15 1l1.900.8l1.900-.8l.2-2h-5.700l-.2-1.500h6.100l.15-1h-6.600z" fill="#3fa4f4"/></svg>
<span style="left:358.00px;top:185.18px;font-size:9.75px;line-height:13.65px;color:#d2d2d2;-webkit-text-stroke:.18px;">main.wxss</span>
<svg style="left:343px;top:203.5px;" width="10" height="10" viewBox="0 0 10 10"><rect x=".3" y=".5" width="9" height="9" fill="#f2c31c"/><text x="8.600" y="8.500" font-size="4.400" font-weight="700" text-anchor="end" fill="#3a2e00" font-family="Liberation Sans">JS</text></svg>
<span style="left:358.00px;top:201.68px;font-size:9.75px;line-height:13.65px;color:#d2d2d2;-webkit-text-stroke:.18px;">runtime.js</span>
<svg style="left:343px;top:220.0px;" width="10" height="10" viewBox="0 0 10 10"><rect x=".3" y=".5" width="9" height="9" fill="#f2c31c"/><text x="8.600" y="8.500" font-size="4.400" font-weight="700" text-anchor="end" fill="#3a2e00" font-family="Liberation Sans">JS</text></svg>
<span style="left:358.00px;top:218.18px;font-size:9.75px;line-height:13.65px;color:#d2d2d2;-webkit-text-stroke:.18px;">vendor.js</span>
<svg style="left:326px;top:239.5px;" width="6" height="5" viewBox="0 0 6 5"><path d="M.5 .8h5l-2.500 3.200z" fill="#c0c0c0"/></svg>
<svg style="left:336px;top:236.5px;" width="12" height="10" viewBox="0 0 12 10"><path d="M.5 1h4l1 1.300h5v1.500h-8l-2 5z" fill="#f4603a"/><path d="M2.800 4.300h9l-2 5h-9z" fill="#ff8a65"/></svg>
<svg style="left:342px;top:240.5px;" width="7" height="6" viewBox="0 0 7 6"><rect x="0" y="0" width="6.500" height="5.500" rx="1" fill="#ffd7cc"/></svg>
<span style="left:352.00px;top:234.68px;font-size:9.75px;line-height:13.65px;color:#d2d2d2;-webkit-text-stroke:.18px;">pages</span>
<svg style="left:332px;top:256.0px;" width="6" height="5" viewBox="0 0 6 5"><path d="M.5 .8h5l-2.500 3.200z" fill="#c0c0c0"/></svg>
<svg style="left:342px;top:253.0px;" width="12" height="10" viewBox="0 0 12 10"><path d="M.5 1h4l1 1.300h5v1.500h-8l-2 5z" fill="#8fa4b0"/><path d="M2.800 4.300h9l-2 5h-9z" fill="#a9bcc7"/></svg>
<span style="left:358.00px;top:251.18px;font-size:9.75px;line-height:13.65px;color:#d2d2d2;-webkit-text-stroke:.18px;">index</span>
<svg style="left:349px;top:269.5px;" width="10" height="10" viewBox="0 0 10 10"><rect x=".3" y=".5" width="9" height="9" fill="#f2c31c"/><text x="8.600" y="8.500" font-size="4.400" font-weight="700" text-anchor="end" fill="#3a2e00" font-family="Liberation Sans">JS</text></svg>
<span style="left:364.00px;top:267.68px;font-size:9.75px;line-height:13.65px;color:#d2d2d2;-webkit-text-stroke:.18px;">index.js</span>
<span style="left:347.50px;top:284.68px;font-size:8.6px;line-height:12.04px;color:#f0b429;font-weight:700;letter-spacing:-0.4px;">{..}</span>
<span style="left:364.00px;top:284.18px;font-size:9.75px;line-height:13.65px;color:#d2d2d2;-webkit-text-stroke:.18px;">index.json</span>
<svg style="left:349px;top:302.0px;" width="10" height="11" viewBox="0 0 10 11"><path d="M1 .5h5.200l2.800 2.800v7.200h-8z" fill="#7ec242"/><path d="M3.200 6.500l1.300-1.200M3.200 6.500l1.300 1.200M6.800 6.500l-1.300-1.200M6.800 6.500l-1.300 1.200" stroke="#20400a" stroke-width=".9" fill="none"/></svg>
<span style="left:364.00px;top:300.68px;font-size:9.75px;line-height:13.65px;color:#d2d2d2;-webkit-text-stroke:.18px;">index.wxml</span>
<svg style="left:349px;top:319.0px;" width="10" height="10" viewBox="0 0 10 10"><path d="M1 .6h8.500l-.9 7l-3.400 1.700l-3.400-1.700l-.25-2h1.600l.15 1l1.900.8l1.900-.8l.2-2h-5.700l-.2-1.500h6.100l.15-1h-6.600z" fill="#3fa4f4"/></svg>
<span style="left:364.00px;top:317.18px;font-size:9.75px;line-height:13.65px;color:#d2d2d2;-webkit-text-stroke:.18px;">index.wxss</span>
<svg style="left:327px;top:337.5px;" width="5" height="6" viewBox="0 0 5 6"><path d="M.8 .5l3.200 2.500l-3.200 2.500z" fill="#c0c0c0"/></svg>
<svg style="left:336px;top:335.5px;" width="12" height="10" viewBox="0 0 12 10"><path d="M.5 1h4l1 1.300h5.500v7h-10.500z" fill="#fbc02d"/></svg>
<span style="left:352.00px;top:333.68px;font-size:9.75px;line-height:13.65px;color:#d2d2d2;-webkit-text-stroke:.18px;">static</span>
<svg style="left:327px;top:354.0px;" width="5" height="6" viewBox="0 0 5 6"><path d="M.8 .5l3.200 2.500l-3.200 2.500z" fill="#c0c0c0"/></svg>
<svg style="left:336px;top:352.0px;" width="12" height="10" viewBox="0 0 12 10"><path d="M.5 1h4l1 1.300h5.500v7h-10.500z" fill="#8fa4b0"/></svg>
<span style="left:352.00px;top:350.18px;font-size:9.75px;line-height:13.65px;color:#d2d2d2;-webkit-text-stroke:.18px;">uni_modules</span>
<svg style="left:336.5px;top:368.0px;" width="11" height="11" viewBox="0 0 11 11"><path d="M5.500 .4l5.100 5.100l-5.100 5.100l-5.100-5.100z" fill="#e5532d"/><path d="M4.200 3.200l2.300 2.300v2.300M6.500 5.500l1.300 0" stroke="#2e2e2e" stroke-width=".9" fill="none"/></svg>
<span style="left:352.00px;top:366.68px;font-size:9.75px;line-height:13.65px;color:#d2d2d2;-webkit-text-stroke:.18px;">.gitignore</span>
<svg style="left:336.5px;top:386.0px;" width="12" height="8" viewBox="0 0 12 8"><rect x=".8" y="1.200" width="10.400" height="5.600" rx="2.800" fill="none" stroke="#3fa4f4" stroke-width="1.300"/><path d="M3.800 4h4.400" stroke="#3fa4f4" stroke-width="1.200"/><rect x="5.200" y="0" width="1.600" height="2.600" fill="#2e2e2e"/><rect x="5.200" y="5.400" width="1.600" height="2.600" fill="#2e2e2e"/></svg>
<span class="h" style="left:352.00px;top:383.18px;font-size:9.75px;line-height:13.65px;color:#d2d2d2;">站长图库</span>
<span style="left:391.00px;top:383.18px;font-size:9.75px;line-height:13.65px;color:#d2d2d2;-webkit-text-stroke:.18px;">.url</span>
<svg style="left:336.5px;top:401.5px;" width="10" height="10" viewBox="0 0 10 10"><rect x=".3" y=".5" width="9" height="9" fill="#f2c31c"/><text x="8.600" y="8.500" font-size="4.400" font-weight="700" text-anchor="end" fill="#3a2e00" font-family="Liberation Sans">JS</text></svg>
<span style="left:352.00px;top:399.68px;font-size:9.75px;line-height:13.65px;color:#d2d2d2;-webkit-text-stroke:.18px;">app.js</span>
<span style="left:335.00px;top:416.68px;font-size:8.6px;line-height:12.04px;color:#f0b429;font-weight:700;letter-spacing:-0.4px;">{..}</span>
<span style="left:352.00px;top:416.18px;font-size:9.75px;line-height:13.65px;color:#d2d2d2;-webkit-text-stroke:.18px;">app.json</span>
<svg style="left:336.5px;top:434.5px;" width="10" height="10" viewBox="0 0 10 10"><path d="M1 .6h8.500l-.9 7l-3.400 1.700l-3.400-1.700l-.25-2h1.600l.15 1l1.900.8l1.900-.8l.2-2h-5.700l-.2-1.500h6.100l.15-1h-6.600z" fill="#3fa4f4"/></svg>
<span style="left:352.00px;top:432.68px;font-size:9.75px;line-height:13.65px;color:#d2d2d2;-webkit-text-stroke:.18px;">app.wxss</span>
<span style="left:335.00px;top:449.68px;font-size:8.6px;line-height:12.04px;color:#f0b429;font-weight:700;letter-spacing:-0.4px;">{..}</span>
<span style="left:352.00px;top:449.18px;font-size:9.75px;line-height:13.65px;color:#d2d2d2;-webkit-text-stroke:.18px;">project.config.json</span>
<span style="left:335.00px;top:466.18px;font-size:8.6px;line-height:12.04px;color:#f0b429;font-weight:700;letter-spacing:-0.4px;">{..}</span>
<span style="left:352.00px;top:465.68px;font-size:9.75px;line-height:13.65px;color:#d2d2d2;-webkit-text-stroke:.18px;">project.private.config.json</span>
<span style="left:335.00px;top:482.68px;font-size:8.6px;line-height:12.04px;color:#f0b429;font-weight:700;letter-spacing:-0.4px;">{..}</span>
<span style="left:352.00px;top:482.18px;font-size:9.75px;line-height:13.65px;color:#d2d2d2;-webkit-text-stroke:.18px;">sitemap.json</span>
<div style="left:310px;top:715px;width:238.5px;height:14px;background:#383838;"></div>
<svg style="left:316px;top:720px;" width="6" height="6" viewBox="0 0 6 6"><path d="M1.500 .8l3.300 2.200l-3.300 2.200z" fill="#c8c8c8"/></svg>
<span class="h" style="left:325.00px;top:716.73px;font-size:8.25px;line-height:11.55px;color:#dcdcdc;font-weight:700;">大纲</span>
<div style="left:549.5px;top:68px;width:350.5px;height:24px;background:#333333;"></div>
<div style="left:549.5px;top:92px;width:350.5px;height:317px;background:#2b2b2b;"></div>
<div style="left:612.5px;top:261px;width:276.5px;height:18px;background:#383838;"></div>
<div style="left:612px;top:108px;width:0.8px;height:301px;background:#3f3f3f;"></div>
<div style="left:621.5px;top:108px;width:0.8px;height:301px;background:#3f3f3f;"></div>
<div style="left:632px;top:171px;width:0.8px;height:162px;background:#3f3f3f;"></div>
<div style="left:889px;top:108px;width:0.8px;height:301px;background:#3a3a3a;"></div>
<div style="left:897px;top:68px;width:3px;height:341px;background:#2b2b2b;"></div>
<div style="left:889.5px;top:391.3px;width:7.5px;height:1.6px;background:#a0a0a0;"></div>
<span style="left:631.40px;top:103.52px;font-size:8.25px;line-height:11.55px;color:#62b35f;font-family:'Liberation Mono',monospace;-webkit-text-stroke:.22px;">/*! exports provided: applicationKey, qweatherKey,</span>
<span style="left:631.40px;top:121.52px;font-size:8.25px;line-height:11.55px;color:#62b35f;font-family:'Liberation Mono',monospace;-webkit-text-stroke:.22px;">version, description, default */</span>
<span style="left:567.25px;top:139.53px;font-size:8.25px;line-height:11.55px;color:#545454;font-family:'Liberation Mono',monospace;">22051</span>
<span style="left:631.40px;top:139.53px;font-size:8.25px;line-height:11.55px;color:#62b35f;font-family:'Liberation Mono',monospace;-webkit-text-stroke:.22px;">/***/</span>
<span style="left:567.25px;top:157.53px;font-size:8.25px;line-height:11.55px;color:#545454;font-family:'Liberation Mono',monospace;">22052</span>
<span style="left:631.40px;top:157.53px;font-size:8.25px;line-height:11.55px;color:#f0d840;font-family:'Liberation Mono',monospace;-webkit-text-stroke:.22px;">(</span>
<span style="left:636.35px;top:157.53px;font-size:8.25px;line-height:11.55px;color:#ebe04e;font-family:'Liberation Mono',monospace;-webkit-text-stroke:.22px;">function</span>
<span style="left:675.95px;top:157.53px;font-size:8.25px;line-height:11.55px;color:#fff;font-family:'Liberation Mono',monospace;-webkit-text-stroke:.22px;"> </span>
<span style="left:680.90px;top:157.53px;font-size:8.25px;line-height:11.55px;color:#dc78d8;font-family:'Liberation Mono',monospace;-webkit-text-stroke:.22px;">(</span>
<span style="left:685.85px;top:157.53px;font-size:8.25px;line-height:11.55px;color:#ea5c7a;font-family:'Liberation Mono',monospace;-webkit-text-stroke:.22px;">module</span>
<span style="left:715.55px;top:157.53px;font-size:8.25px;line-height:11.55px;color:#dc78d8;font-family:'Liberation Mono',monospace;-webkit-text-stroke:.22px;">)</span>
<span style="left:720.50px;top:157.53px;font-size:8.25px;line-height:11.55px;color:#fff;font-family:'Liberation Mono',monospace;-webkit-text-stroke:.22px;"> </span>
<span style="left:725.45px;top:157.53px;font-size:8.25px;line-height:11.55px;color:#c586d8;font-family:'Liberation Mono',monospace;-webkit-text-stroke:.22px;">{</span>
<svg style="left:597px;top:157px;" width="10" height="8" viewBox="0 0 10 8"><path d="M1.500 2l3.500 3.500l3.500-3.500" stroke="#c0c0c0" stroke-width="1.2" fill="none" /></svg>
<span style="left:567.25px;top:175.53px;font-size:8.25px;line-height:11.55px;color:#545454;font-family:'Liberation Mono',monospace;">22053</span>
<span style="left:567.25px;top:193.53px;font-size:8.25px;line-height:11.55px;color:#545454;font-family:'Liberation Mono',monospace;">22054</span>
<span style="left:641.30px;top:193.53px;font-size:8.25px;line-height:11.55px;color:#cf74e6;font-family:'Liberation Mono',monospace;-webkit-text-stroke:.22px;">module</span>
<span style="left:671.00px;top:193.53px;font-size:8.25px;line-height:11.55px;color:#a8a0f0;font-family:'Liberation Mono',monospace;-webkit-text-stroke:.22px;">.</span>
<span style="left:675.95px;top:193.53px;font-size:8.25px;line-height:11.55px;color:#9090f8;font-family:'Liberation Mono',monospace;-webkit-text-stroke:.22px;">exports</span>
<span style="left:710.60px;top:193.53px;font-size:8.25px;line-height:11.55px;color:#fff;font-family:'Liberation Mono',monospace;-webkit-text-stroke:.22px;"> </span>
<span style="left:715.55px;top:193.53px;font-size:8.25px;line-height:11.55px;color:#e0c060;font-family:'Liberation Mono',monospace;-webkit-text-stroke:.22px;">=</span>
<span style="left:720.50px;top:193.53px;font-size:8.25px;line-height:11.55px;color:#fff;font-family:'Liberation Mono',monospace;-webkit-text-stroke:.22px;"> </span>
<span style="left:725.45px;top:193.53px;font-size:8.25px;line-height:11.55px;color:#e89a58;font-family:'Liberation Mono',monospace;-webkit-text-stroke:.22px;">JSON</span>
<span style="left:745.25px;top:193.53px;font-size:8.25px;line-height:11.55px;color:#e0a060;font-family:'Liberation Mono',monospace;-webkit-text-stroke:.22px;">.</span>
<span style="left:750.20px;top:193.53px;font-size:8.25px;line-height:11.55px;color:#e8a048;font-family:'Liberation Mono',monospace;-webkit-text-stroke:.22px;">parse</span>
<div style="left:774.6500000000002px;top:191.5px;width:5.2px;height:13px;background:#2f3f4a;box-shadow:0 0 0 .7px #7a8a92 inset;"></div>
<span style="left:774.95px;top:193.53px;font-size:8.25px;line-height:11.55px;color:#4aa8f0;font-family:'Liberation Mono',monospace;-webkit-text-stroke:.22px;">(</span>
<span style="left:779.90px;top:193.53px;font-size:8.25px;line-height:11.55px;color:#8fd0f0;font-family:'Liberation Mono',monospace;-webkit-text-stroke:.22px;">&quot;</span>
<span style="left:641.30px;top:211.53px;font-size:8.25px;line-height:11.55px;color:#ea6e57;font-family:'Liberation Mono',monospace;-webkit-text-stroke:.22px;">{\&quot;applicationKey\&quot;:\&quot;BO6BZ-6UQEW-LPLRF-OHRJT-KOK</span>
<span style="left:641.30px;top:229.53px;font-size:8.25px;line-height:11.55px;color:#ea6e57;font-family:'Liberation Mono',monospace;-webkit-text-stroke:.22px;">TK-BSBRC\&quot;,</span>
<span style="left:641.30px;top:247.53px;font-size:8.25px;line-height:11.55px;color:#ea6e57;font-family:'Liberation Mono',monospace;-webkit-text-stroke:.22px;">\&quot;qweatherKey\&quot;:\&quot;57c9dd2d3fac41d89642d96b97a75d8</span>
<span style="left:641.30px;top:265.53px;font-size:8.25px;line-height:11.55px;color:#ea6e57;font-family:'Liberation Mono',monospace;-webkit-text-stroke:.22px;">2\&quot;,\&quot;version\&quot;:\&quot;1.0.0\&quot;,\&quot;description\&quot;:\&quot;</span>
<span class="h" style="left:859.10px;top:265.23px;font-size:9px;line-height:11.55px;color:#ea6e57;">三</span>
<span class="h" style="left:868.10px;top:265.23px;font-size:9px;line-height:11.55px;color:#ea6e57;">岁</span>
<span style="left:877.10px;top:265.53px;font-size:8.25px;line-height:11.55px;color:#ea6e57;font-family:'Liberation Mono',monospace;-webkit-text-stroke:.22px;">-</span>
<span class="h" style="left:641.30px;top:283.23px;font-size:9px;line-height:11.55px;color:#ea6e57;">天</span>
<span class="h" style="left:650.30px;top:283.23px;font-size:9px;line-height:11.55px;color:#ea6e57;">气</span>
<span class="h" style="left:659.30px;top:283.23px;font-size:9px;line-height:11.55px;color:#ea6e57;">预</span>
<span class="h" style="left:668.30px;top:283.23px;font-size:9px;line-height:11.55px;color:#ea6e57;">报</span>
<span class="h" style="left:677.30px;top:283.23px;font-size:9px;line-height:11.55px;color:#ea6e57;">小</span>
<span class="h" style="left:686.30px;top:283.23px;font-size:9px;line-height:11.55px;color:#ea6e57;">程</span>
<span class="h" style="left:695.30px;top:283.23px;font-size:9px;line-height:11.55px;color:#ea6e57;">序</span>
<span style="left:704.30px;top:283.53px;font-size:8.25px;line-height:11.55px;color:#ea6e57;font-family:'Liberation Mono',monospace;-webkit-text-stroke:.22px;">\&quot;}</span>
<span style="left:719.15px;top:283.53px;font-size:8.25px;line-height:11.55px;color:#8fd0f0;font-family:'Liberation Mono',monospace;-webkit-text-stroke:.22px;">&quot;</span>
<div style="left:723.8000000000001px;top:281.5px;width:5.2px;height:13px;background:#2f3f4a;box-shadow:0 0 0 .7px #7a8a92 inset;"></div>
<span style="left:724.10px;top:283.53px;font-size:8.25px;line-height:11.55px;color:#4aa8f0;font-family:'Liberation Mono',monospace;">)</span>
<span style="left:729.05px;top:283.53px;font-size:8.25px;line-height:11.55px;color:#e0e0e0;font-family:'Liberation Mono',monospace;">;</span>
<span style="left:567.25px;top:301.53px;font-size:8.25px;line-height:11.55px;color:#545454;font-family:'Liberation Mono',monospace;">22055</span>
<span style="left:567.25px;top:319.53px;font-size:8.25px;line-height:11.55px;color:#545454;font-family:'Liberation Mono',monospace;">22056</span>
<span style="left:641.30px;top:319.53px;font-size:8.25px;line-height:11.55px;color:#62b35f;font-family:'Liberation Mono',monospace;-webkit-text-stroke:.22px;">/***/</span>
<span style="left:567.25px;top:337.53px;font-size:8.25px;line-height:11.55px;color:#545454;font-family:'Liberation Mono',monospace;">22057</span>
<span style="left:631.40px;top:337.53px;font-size:8.25px;line-height:11.55px;color:#c586d8;font-family:'Liberation Mono',monospace;-webkit-text-stroke:.22px;">}</span>
<span style="left:636.35px;top:337.53px;font-size:8.25px;line-height:11.55px;color:#f0d840;font-family:'Liberation Mono',monospace;-webkit-text-stroke:.22px;">)</span>
<span style="left:641.30px;top:337.53px;font-size:8.25px;line-height:11.55px;color:#e0e0e0;font-family:'Liberation Mono',monospace;-webkit-text-stroke:.22px;">,</span>
<span style="left:567.25px;top:355.53px;font-size:8.25px;line-height:11.55px;color:#545454;font-family:'Liberation Mono',monospace;">22058</span>
<span style="left:631.40px;top:355.53px;font-size:8.25px;line-height:11.55px;color:#62b35f;font-family:'Liberation Mono',monospace;-webkit-text-stroke:.22px;">/* 148 */</span>
<span style="left:567.25px;top:373.53px;font-size:8.25px;line-height:11.55px;color:#545454;font-family:'Liberation Mono',monospace;">22059</span>
<span style="left:631.40px;top:373.53px;font-size:8.25px;line-height:11.55px;color:#e0e0e0;font-family:'Liberation Mono',monospace;-webkit-text-stroke:.22px;">,</span>
<span style="left:567.25px;top:391.53px;font-size:8.25px;line-height:11.55px;color:#545454;font-family:'Liberation Mono',monospace;">22060</span>
<span style="left:631.40px;top:391.53px;font-size:8.25px;line-height:11.55px;color:#62b35f;font-family:'Liberation Mono',monospace;-webkit-text-stroke:.22px;">/* 149 */</span>
<div style="left:549.5px;top:92px;width:347.5px;height:16px;background:#2b2b2b;box-shadow:0 2px 3px rgba(0,0,0,.45);"></div>
<svg style="left:554px;top:95px;" width="14" height="10" viewBox="0 0 14 10"><path d="M1.500 1.500h1M4 1.500h9M1.500 4h1M4 4h9M1.500 6.500h1M4 6.500h9M1.500 9h1M4 9h9" stroke="#a2a2a2" stroke-width="1" fill="none" /></svg>
<svg style="left:579px;top:94px;" width="10" height="12" viewBox="0 0 10 12"><path d="M1.500 1.500h7v9l-3.500-2.800l-3.500 2.800z" stroke="#a2a2a2" stroke-width="1.2" fill="none" /></svg>
<svg style="left:600px;top:95px;" width="12" height="10" viewBox="0 0 12 10"><path d="M11 5h-9.500M5 1.500l-3.500 3.500l3.500 3.500" stroke="#a2a2a2" stroke-width="1.2" fill="none" /></svg>
<svg style="left:621px;top:95px;" width="12" height="10" viewBox="0 0 12 10"><path d="M1 5h9.500M7 1.500l3.500 3.500l-3.500 3.500" stroke="#555" stroke-width="1.2" fill="none" /></svg>
<span style="left:644.00px;top:93.17px;font-size:9.75px;line-height:13.65px;color:#a2a2a2;">common</span>
<svg style="left:686px;top:96px;" width="6" height="9" viewBox="0 0 6 9"><path d="M1.200 1l3.300 3.500l-3.300 3.500" stroke="#9a9a9a" stroke-width="1.1" fill="none" /></svg>
<svg style="left:696px;top:95px;" width="10" height="10" viewBox="0 0 10 10"><rect x=".3" y=".5" width="9" height="9" fill="#f2c31c"/><text x="8.600" y="8.500" font-size="4.400" font-weight="700" text-anchor="end" fill="#3a2e00" font-family="Liberation Sans">JS</text></svg>
<span style="left:710.00px;top:93.17px;font-size:9.75px;line-height:13.65px;color:#b4b4b4;">vendor.js</span>
<svg style="left:753px;top:96px;" width="6" height="9" viewBox="0 0 6 9"><path d="M1.200 1l3.300 3.500l-3.300 3.500" stroke="#9a9a9a" stroke-width="1.1" fill="none" /></svg>
<svg style="left:762px;top:94.5px;" width="12" height="12" viewBox="0 0 12 12"><path d="M6 1l4.500 2.500v5l-4.500 2.500l-4.500-2.500v-5zM1.500 3.500l4.500 2.500l4.500-2.500M6 6v5" stroke="#b180d7" stroke-width="1" fill="none" /></svg>
<span style="left:779.00px;top:93.17px;font-size:9.75px;line-height:13.65px;color:#a2a2a2;">&lt;function&gt;</span>
<svg style="left:831px;top:96px;" width="6" height="9" viewBox="0 0 6 9"><path d="M1.200 1l3.300 3.500l-3.300 3.500" stroke="#9a9a9a" stroke-width="1.1" fill="none" /></svg>
<svg style="left:838px;top:95.5px;" width="14" height="10" viewBox="0 0 14 10"><path d="M3.500 1h-2.500v8h2.500M10.500 1h2.500v8h-2.500" stroke="#75beff" stroke-width="1.1" fill="none" /><circle cx="7" cy="5" r="2.300" fill="none" stroke="#75beff" stroke-width="1.100"/><circle cx="7" cy="5" r=".8" fill="#75beff"/></svg>
<div class="c" style="left:855px;top:92px;width:42px;height:16px"><span style="left:1px;top:1.200px;font-size:9.75px;line-height:13.600px;color:#a2a2a2">&lt;unknown&gt;</span></div>
<div style="left:549.5px;top:68px;width:90.5px;height:24px;background:#2b2b2b;"></div>
<svg style="left:558px;top:75px;" width="10" height="10" viewBox="0 0 10 10"><rect x=".3" y=".5" width="9" height="9" fill="#f2c31c"/><text x="8.600" y="8.500" font-size="4.400" font-weight="700" text-anchor="end" fill="#3a2e00" font-family="Liberation Sans">JS</text></svg>
<span style="left:573.00px;top:73.17px;font-size:9.75px;line-height:13.65px;color:#ffffff;">vendor.js</span>
<svg style="left:620px;top:74.5px;" width="12" height="12" viewBox="0 0 12 12"><path d="M2.500 2.500l7 7M9.500 2.500l-7 7" stroke="#f0f0f0" stroke-width="1.3" fill="none" /></svg>
<svg style="left:850px;top:74px;" width="12" height="12" viewBox="0 0 12 12"><path d="M1.500 1.500h9v9h-9zM6 1.500v9" stroke="#c8c8c8" stroke-width="1.2" fill="none" /></svg>
<span style="left:875.00px;top:74.00px;font-size:10px;line-height:14.0px;color:#c8c8c8;font-weight:700;letter-spacing:0.9px;">···</span>
<div style="left:549.5px;top:409px;width:347.5px;height:22px;background:#2e2e2e;"></div>
<div style="left:549.5px;top:409px;width:347.5px;height:0.8px;background:#404040;"></div>
<div style="left:897px;top:409px;width:3px;height:320px;background:#2e2e2e;"></div>
<span class="h" style="left:564.00px;top:415.23px;font-size:8.25px;line-height:11.55px;color:#ececec;font-weight:700;">调试器</span>
<div style="left:564px;top:429.8px;width:25px;height:1px;background:#d0d0d0;"></div>
<div style="left:596px;top:414px;width:15.5px;height:14px;background:#4e4e4e;border-radius:7px;"></div>
<span style="left:599.21px;top:415.23px;font-size:8.25px;line-height:11.55px;color:#fff;">15</span>
<span class="h" style="left:626.00px;top:415.23px;font-size:8.25px;line-height:11.55px;color:#8e8e8e;">问题</span>
<span class="h" style="left:657.00px;top:415.23px;font-size:8.25px;line-height:11.55px;color:#8e8e8e;">输出</span>
<span class="h" style="left:689.00px;top:415.23px;font-size:8.25px;line-height:11.55px;color:#8e8e8e;">终端</span>
<span class="h" style="left:721.00px;top:415.23px;font-size:8.25px;line-height:11.55px;color:#8e8e8e;">代码质量</span>
<svg style="left:850.5px;top:417px;" width="14" height="10" viewBox="0 0 14 10"><path d="M1.600 7.800l4.300-4.300l4.300 4.300" stroke="#c8c8c8" stroke-width="1.2" fill="none" /></svg>
<svg style="left:875px;top:418px;" width="10" height="10" viewBox="0 0 10 10"><path d="M1.300 1.600l7.400 6.600M8.700 1.600l-7.400 6.600" stroke="#c8c8c8" stroke-width="1.2" fill="none" /></svg>
<div style="left:549.5px;top:431px;width:347.5px;height:20px;background:#2e3034;"></div>
<div style="left:549.5px;top:450.6px;width:347.5px;height:0.8px;background:#474a4e;"></div>
<svg style="left:555px;top:435px;" width="14" height="13" viewBox="0 0 14 13"><path d="M8 10.500h-6v-8.500h8.500v4.500" stroke="#9aa0a6" stroke-width="1.1" fill="none" stroke-dasharray="2 1"/><path d="M6.500 5.500l6 2.300l-2.500 1l2 2.300l-1 .9l-2-2.300l-1.500 2z" fill="#9aa0a6"/></svg>
<div style="left:575px;top:435px;width:0.8px;height:12px;background:#4a4a4a;"></div>
<span style="left:589.00px;top:435.70px;font-size:9px;line-height:12.6px;color:#d2d2d2;">Wxml</span>
<span style="left:629.00px;top:435.70px;font-size:9px;line-height:12.6px;color:#d2d2d2;letter-spacing:-0.15px;">Performance</span>
<div style="left:688px;top:432px;width:49.5px;height:19px;background:#000;"></div>
<span style="left:697.00px;top:435.70px;font-size:9px;line-height:12.6px;color:#fff;letter-spacing:-0.1px;">Console</span>
<span style="left:743.50px;top:434.50px;font-size:10px;line-height:14.0px;color:#aaa;">»</span>
<svg style="left:787px;top:437px;" width="10" height="9" viewBox="0 0 10 9"><path d="M5 .6l4.600 8h-9.200z" fill="#f4c430"/></svg>
<span style="left:799.00px;top:435.70px;font-size:9px;line-height:12.6px;color:#d2d2d2;letter-spacing:-0.3px;">15</span>
<svg style="left:811.5px;top:437.5px;" width="9" height="8" viewBox="0 0 9 8"><path d="M.5 .5h8v5h-5.500l-2.500 2z" fill="#3b8af2"/></svg>
<span style="left:822.50px;top:435.70px;font-size:9px;line-height:12.6px;color:#d2d2d2;">1</span>
<div style="left:832px;top:435px;width:0.8px;height:12px;background:#4a4a4a;"></div>
<svg style="left:839.2px;top:435.6px;" width="12" height="12" viewBox="0 0 12 12"><g transform="translate(6 6)"><rect x="-1.150" y="-5.200" width="2.300" height="2.800" fill="#a8a8a8" transform="rotate(0)"/><rect x="-1.150" y="-5.200" width="2.300" height="2.800" fill="#a8a8a8" transform="rotate(45)"/><rect x="-1.150" y="-5.200" width="2.300" height="2.800" fill="#a8a8a8" transform="rotate(90)"/><rect x="-1.150" y="-5.200" width="2.300" height="2.800" fill="#a8a8a8" transform="rotate(135)"/><rect x="-1.150" y="-5.200" width="2.300" height="2.800" fill="#a8a8a8" transform="rotate(180)"/><rect x="-1.150" y="-5.200" width="2.300" height="2.800" fill="#a8a8a8" transform="rotate(225)"/><rect x="-1.150" y="-5.200" width="2.300" height="2.800" fill="#a8a8a8" transform="rotate(270)"/><rect x="-1.150" y="-5.200" width="2.300" height="2.800" fill="#a8a8a8" transform="rotate(315)"/><circle r="2.900" fill="none" stroke="#a8a8a8" stroke-width="1.900"/></g></svg>
<div style="left:865.3px;top:437.0px;width:1.8px;height:1.8px;background:#a8a8a8;border-radius:1px;"></div>
<div style="left:865.3px;top:440.8px;width:1.8px;height:1.8px;background:#a8a8a8;border-radius:1px;"></div>
<div style="left:865.3px;top:444.6px;width:1.8px;height:1.8px;background:#a8a8a8;border-radius:1px;"></div>
<svg style="left:881px;top:435.5px;" width="13" height="12" viewBox="0 0 13 12"><path d="M4 1.500h8v6.500h-8zM4 4h-2.500v6.500h8v-2.500" stroke="#a0a0a0" stroke-width="1.2" fill="none" /></svg>
<div style="left:549.5px;top:451.4px;width:347.5px;height:20px;background:#2d2f33;"></div>
<div style="left:549.5px;top:470.6px;width:347.5px;height:0.8px;background:#474a4e;"></div>
<svg style="left:555px;top:456px;" width="13" height="11" viewBox="0 0 13 11"><path d="M1.500 1.500h10v8h-10zM4 1.500v8" stroke="#a8a8a8" stroke-width="1.1" fill="none" /><path d="M6 3.500l3.500 2l-3.500 2z" fill="#a8a8a8"/></svg>
<svg style="left:577.5px;top:455.5px;" width="12" height="12" viewBox="0 0 12 12"><circle cx="6" cy="6" r="4.600" fill="none" stroke="#a8a8a8" stroke-width="1.200"/><path d="M2.800 2.800l6.400 6.400" stroke="#a8a8a8" stroke-width="1.2" fill="none" /></svg>
<div style="left:597px;top:455px;width:0.8px;height:12px;background:#4a4a4a;"></div>
<span style="left:603.00px;top:455.70px;font-size:9px;line-height:12.6px;color:#e0e0e0;letter-spacing:-0.05px;">appservice (#1)</span>
<svg style="left:693.5px;top:459.5px;" width="7" height="5" viewBox="0 0 7 5"><path d="M.3 .3h6.400l-3.200 4.400z" fill="#9a9a9a"/></svg>
<div style="left:705px;top:455px;width:0.8px;height:12px;background:#4a4a4a;"></div>
<svg style="left:713.5px;top:456px;" width="15" height="11" viewBox="0 0 15 11"><path d="M.8 5.500q6.700-7.600 13.400 0q-6.700 7.600-13.400 0z" fill="#a8a8a8"/><circle cx="7.500" cy="5.500" r="2.600" fill="#303030"/><circle cx="7.500" cy="5.500" r="1.300" fill="#a8a8a8"/></svg>
<div style="left:733px;top:455px;width:0.8px;height:12px;background:#4a4a4a;"></div>
<div style="left:739px;top:454px;width:27.5px;height:14.5px;background:#2c2c2c;box-shadow:0 0 0 .8px #5a5a5a inset;"></div>
<span style="left:743.00px;top:455.70px;font-size:9px;line-height:12.6px;color:#c8c8c8;">Filter</span>
<div class="c" style="left:772px;top:452px;width:52px;height:19px"><span style="left:1px;top:3.700px;font-size:9px;line-height:12.600px;color:#d6d6d6;letter-spacing:-.1px">Default levels ▾</span></div>
<div style="left:830px;top:455px;width:0.8px;height:12px;background:#4a4a4a;"></div>
<span style="left:838.00px;top:455.70px;font-size:9px;line-height:12.6px;color:#9a9a9a;letter-spacing:-0.1px;">3 hidden</span>
<svg style="left:881.3px;top:455.7px;" width="12" height="12" viewBox="0 0 12 12"><g transform="translate(6 6)"><rect x="-1.150" y="-5.200" width="2.300" height="2.800" fill="#a8a8a8" transform="rotate(0)"/><rect x="-1.150" y="-5.200" width="2.300" height="2.800" fill="#a8a8a8" transform="rotate(45)"/><rect x="-1.150" y="-5.200" width="2.300" height="2.800" fill="#a8a8a8" transform="rotate(90)"/><rect x="-1.150" y="-5.200" width="2.300" height="2.800" fill="#a8a8a8" transform="rotate(135)"/><rect x="-1.150" y="-5.200" width="2.300" height="2.800" fill="#a8a8a8" transform="rotate(180)"/><rect x="-1.150" y="-5.200" width="2.300" height="2.800" fill="#a8a8a8" transform="rotate(225)"/><rect x="-1.150" y="-5.200" width="2.300" height="2.800" fill="#a8a8a8" transform="rotate(270)"/><rect x="-1.150" y="-5.200" width="2.300" height="2.800" fill="#a8a8a8" transform="rotate(315)"/><circle r="2.900" fill="none" stroke="#a8a8a8" stroke-width="1.900"/></g></svg>
<div style="left:549.5px;top:471.4px;width:338.5px;height:256.6px;background:#27282b;"></div>
<div style="left:888px;top:471.4px;width:9px;height:108.6px;background:#2a2a2a;"></div>
<div style="left:888px;top:580px;width:9px;height:148px;background:#4a4a4a;"></div>
<div style="left:549.5px;top:471.4px;width:338.5px;height:44.60000000000002px;background:#332b00;"></div>
<div style="left:549.5px;top:515px;width:338.5px;height:1px;background:#5c4a00;"></div>
<span style="left:567.50px;top:472.73px;font-size:8.25px;line-height:11.55px;color:#ecece6;font-family:'Liberation Mono',monospace;-webkit-text-stroke:.2px;">property &quot;mode&quot; of &quot;uni_modules/uview-ui/components/u-</span>
<span style="left:567.50px;top:483.12px;font-size:8.25px;line-height:11.55px;color:#ecece6;font-family:'Liberation Mono',monospace;-webkit-text-stroke:.2px;">transition/u-transition&quot; received type-uncompatible value:</span>
<span style="left:567.50px;top:493.73px;font-size:8.25px;line-height:11.55px;color:#ecece6;font-family:'Liberation Mono',monospace;-webkit-text-stroke:.2px;">expected &lt;String&gt; but get null value. Use empty string</span>
<span style="left:567.50px;top:504.23px;font-size:8.25px;line-height:11.55px;color:#ecece6;font-family:'Liberation Mono',monospace;-webkit-text-stroke:.2px;">instead.</span>
<div style="left:549.5px;top:516px;width:338.5px;height:36px;background:#332b00;"></div>
<div style="left:549.5px;top:551px;width:338.5px;height:1px;background:#5c4a00;"></div>
<svg style="left:553.5px;top:519.0px;" width="10" height="9" viewBox="0 0 10 9"><path d="M5 .4l4.700 8.200h-9.400z" fill="#f4c430"/><rect x="4.500" y="3" width="1" height="3" fill="#332b00"/><rect x="4.500" y="6.700" width="1" height="1" fill="#332b00"/></svg>
<svg style="left:568.5px;top:521.5px;" width="5" height="6" viewBox="0 0 5 6"><path d="M.8 .5l3.200 2.500l-3.200 2.500z" fill="#8a8a8a"/></svg>
<span style="left:575.00px;top:519.12px;font-size:8.25px;line-height:11.55px;color:#ecece6;font-family:'Liberation Mono',monospace;-webkit-text-stroke:.2px;">[Component] slot</span>
<span style="left:669.00px;top:519.12px;font-size:8.25px;line-height:11.55px;color:#d0d0d0;font-family:'Liberation Mono',monospace;text-decoration:underline;-webkit-text-stroke:.2px;">WASubContext.js?t=we_46437460&amp;v=2.24.6:2</span>
<span style="left:567.50px;top:529.73px;font-size:8.25px;line-height:11.55px;color:#ecece6;font-family:'Liberation Mono',monospace;-webkit-text-stroke:.2px;">&quot;&quot; is not found (for component &quot;uni_modules/uview-</span>
<span style="left:567.50px;top:540.02px;font-size:8.25px;line-height:11.55px;color:#ecece6;font-family:'Liberation Mono',monospace;-webkit-text-stroke:.2px;">ui/components/u-transition/u-transition&quot;).</span>
<div style="left:549.5px;top:552px;width:338.5px;height:36px;background:#332b00;"></div>
<div style="left:549.5px;top:587px;width:338.5px;height:1px;background:#5c4a00;"></div>
<div style="left:557px;top:555.6px;width:21px;height:10px;background:#f2b824;border-radius:5px;"></div>
<svg style="left:561px;top:558px;" width="5" height="6" viewBox="0 0 5 6"><path d="M.6 .3l3.600 2.700l-3.600 2.700z" fill="#3a2a00"/></svg>
<span style="left:569.50px;top:555.35px;font-size:7.5px;line-height:10.5px;color:#7a5a00;font-weight:700;">9</span>
<span style="left:587.00px;top:555.02px;font-size:8.25px;line-height:11.55px;color:#ecece6;font-family:'Liberation Mono',monospace;-webkit-text-stroke:.2px;">[pages/index/index] Some selectors are not allowed in</span>
<span style="left:587.00px;top:565.73px;font-size:8.25px;line-height:11.55px;color:#ecece6;font-family:'Liberation Mono',monospace;-webkit-text-stroke:.2px;">component wxss, including tag name selectors, ID</span>
<span style="left:587.00px;top:576.23px;font-size:8.25px;line-height:11.55px;color:#ecece6;font-family:'Liberation Mono',monospace;-webkit-text-stroke:.2px;">selectors, and attribute selectors.(.&lt;URL&gt;:1)</span>
<div style="left:549.5px;top:588px;width:338.5px;height:16px;background:#27282b;"></div>
<div style="left:549.5px;top:603px;width:338.5px;height:1px;background:#3a3a3a;"></div>
<span style="left:567.50px;top:591.02px;font-size:8.25px;line-height:11.55px;color:#ecece6;font-family:'Liberation Mono',monospace;-webkit-text-stroke:.2px;">[system] Launch Time: 3242 ms</span>
<span style="left:743.25px;top:591.02px;font-size:8.25px;line-height:11.55px;color:#d0d0d0;font-family:'Liberation Mono',monospace;text-decoration:underline;-webkit-text-stroke:.2px;">WAServiceMainContext.js:2</span>
<div style="left:549.5px;top:604px;width:338.5px;height:34px;background:#27282b;"></div>
<div style="left:549.5px;top:637px;width:338.5px;height:1px;background:#3a3a3a;"></div>
<svg style="left:556.5px;top:608.5px;" width="7" height="6" viewBox="0 0 7 6"><path d="M.4 .5h6.200l-3.100 4.600z" fill="#8a8a8a"/></svg>
<span style="left:567.50px;top:606.02px;font-size:8.25px;line-height:11.55px;color:#f4f4f4;font-family:'Liberation Mono',monospace;font-weight:700;">Sun Jun 19 2022 21:47:25 GMT+0800 (</span>
<span class="h" style="left:740.78px;top:606.02px;font-size:9px;line-height:11.55px;color:#f4f4f4;font-weight:700;letter-spacing:0.25px;">中国标准</span>
<span style="left:782.85px;top:606.02px;font-size:8.25px;line-height:11.55px;color:#d0d0d0;font-family:'Liberation Mono',monospace;font-weight:700;text-decoration:underline;">VM13 asdebug.js:1</span>
<span class="h" style="left:567.50px;top:616.52px;font-size:9px;line-height:11.55px;color:#f4f4f4;font-weight:700;letter-spacing:0.25px;">时间</span>
<span style="left:586.00px;top:616.52px;font-size:8.25px;line-height:11.55px;color:#f4f4f4;font-family:'Liberation Mono',monospace;font-weight:700;">) </span>
<span class="h" style="left:595.90px;top:616.52px;font-size:9px;line-height:11.55px;color:#f4f4f4;font-weight:700;letter-spacing:0.25px;">配置中关闭合法域名、</span>
<span style="left:688.40px;top:616.52px;font-size:8.25px;line-height:11.55px;color:#f4f4f4;font-family:'Liberation Mono',monospace;font-weight:700;">web-view</span>
<span class="h" style="left:728.01px;top:616.52px;font-size:9px;line-height:11.55px;color:#f4f4f4;font-weight:700;letter-spacing:0.25px;">（业务域名）、</span>
<span style="left:792.76px;top:616.52px;font-size:8.25px;line-height:11.55px;color:#f4f4f4;font-family:'Liberation Mono',monospace;font-weight:700;">TLS </span>
<span class="h" style="left:812.56px;top:616.52px;font-size:9px;line-height:11.55px;color:#f4f4f4;font-weight:700;letter-spacing:0.25px;">版本以及</span>
<span style="left:567.50px;top:626.93px;font-size:8.25px;line-height:11.55px;color:#f4f4f4;font-family:'Liberation Mono',monospace;font-weight:700;">HTTPS </span>
<span class="h" style="left:597.20px;top:626.93px;font-size:9px;line-height:11.55px;color:#f4f4f4;font-weight:700;letter-spacing:0.25px;">证书检查</span>
<div style="left:549.5px;top:638px;width:338.5px;height:26.5px;background:#332b00;"></div>
<div style="left:549.5px;top:663.5px;width:338.5px;height:1px;background:#5c4a00;"></div>
<div style="left:560px;top:638px;width:0.8px;height:62px;background:#6a5a10;"></div>
<svg style="left:564px;top:642.0px;" width="10" height="9" viewBox="0 0 10 9"><path d="M5 .4l4.700 8.200h-9.400z" fill="#f4c430"/><rect x="4.500" y="3" width="1" height="3" fill="#332b00"/><rect x="4.500" y="6.700" width="1" height="1" fill="#332b00"/></svg>
<svg style="left:580px;top:644.5px;" width="5" height="6" viewBox="0 0 5 6"><path d="M.8 .5l3.200 2.500l-3.200 2.500z" fill="#8a8a8a"/></svg>
<span class="h" style="left:586.00px;top:642.02px;font-size:9px;line-height:11.55px;color:#ecece6;">工具未校验合法域名、</span>
<span style="left:676.00px;top:642.02px;font-size:8.25px;line-height:11.55px;color:#ecece6;font-family:'Liberation Mono',monospace;-webkit-text-stroke:.2px;">web-view</span>
<span class="h" style="left:715.61px;top:642.02px;font-size:9px;line-height:11.55px;color:#ecece6;">（业务域名）、</span>
<span style="left:782.85px;top:642.02px;font-size:8.25px;line-height:11.55px;color:#d0d0d0;font-family:'Liberation Mono',monospace;text-decoration:underline;-webkit-text-stroke:.2px;">VM13 asdebug.js:1</span>
<span style="left:578.50px;top:652.33px;font-size:8.25px;line-height:11.55px;color:#ecece6;font-family:'Liberation Mono',monospace;-webkit-text-stroke:.2px;">TLS </span>
<span class="h" style="left:598.30px;top:652.33px;font-size:9px;line-height:11.55px;color:#ecece6;">版本以及</span>
<span style="left:634.30px;top:652.33px;font-size:8.25px;line-height:11.55px;color:#ecece6;font-family:'Liberation Mono',monospace;-webkit-text-stroke:.2px;"> HTTPS </span>
<span class="h" style="left:668.96px;top:652.33px;font-size:9px;line-height:11.55px;color:#ecece6;">证书。</span>
<div style="left:549.5px;top:664.5px;width:338.5px;height:35.5px;background:#332b00;"></div>
<div style="left:549.5px;top:699px;width:338.5px;height:1px;background:#5c4a00;"></div>
<svg style="left:564px;top:668.0px;" width="10" height="9" viewBox="0 0 10 9"><path d="M5 .4l4.700 8.200h-9.400z" fill="#f4c430"/><rect x="4.500" y="3" width="1" height="3" fill="#332b00"/><rect x="4.500" y="6.700" width="1" height="1" fill="#332b00"/></svg>
<span style="left:578.50px;top:667.73px;font-size:8.25px;line-height:11.55px;color:#ecece6;font-family:'Liberation Mono',monospace;-webkit-text-stroke:.2px;">[JS </span>
<span class="h" style="left:598.30px;top:667.73px;font-size:9px;line-height:11.55px;color:#ecece6;">文件编译错误</span>
<span style="left:652.30px;top:667.73px;font-size:8.25px;line-height:11.55px;color:#ecece6;font-family:'Liberation Mono',monospace;-webkit-text-stroke:.2px;">] </span>
<span class="h" style="left:662.20px;top:667.73px;font-size:9px;line-height:11.55px;color:#ecece6;">以下文件体积超过</span>
<span style="left:734.20px;top:667.73px;font-size:8.25px;line-height:11.55px;color:#ecece6;font-family:'Liberation Mono',monospace;-webkit-text-stroke:.2px;"> 500KB</span>
<span class="h" style="left:763.91px;top:667.73px;font-size:9px;line-height:11.55px;color:#ecece6;">，已跳过压缩以及</span>
<span style="left:835.91px;top:667.73px;font-size:8.25px;line-height:11.55px;color:#ecece6;font-family:'Liberation Mono',monospace;-webkit-text-stroke:.2px;"> ES6 </span>
<span class="h" style="left:860.66px;top:667.73px;font-size:9px;line-height:11.55px;color:#ecece6;">转</span>
<span style="left:578.50px;top:678.33px;font-size:8.25px;line-height:11.55px;color:#ecece6;font-family:'Liberation Mono',monospace;-webkit-text-stroke:.2px;">ES5 </span>
<span class="h" style="left:598.30px;top:678.33px;font-size:9px;line-height:11.55px;color:#ecece6;">的处理。</span>
<span style="left:578.50px;top:688.73px;font-size:8.25px;line-height:11.55px;color:#ecece6;font-family:'Liberation Mono',monospace;-webkit-text-stroke:.2px;">common/vendor.js</span>
<svg style="left:554.5px;top:704px;" width="7" height="8" viewBox="0 0 7 8"><path d="M1.600 1.200l3.200 2.800l-3.200 2.800" stroke="#3d78e0" stroke-width="1.7" fill="none" /></svg>
<div style="left:310px;top:729px;width:590px;height:20px;background:#3a3a3a;"></div>
<div style="left:549px;top:728px;width:351px;height:1px;background:#2c2c2c;"></div>
<svg style="left:322px;top:733.5px;" width="11" height="11" viewBox="0 0 11 11"><circle cx="5.500" cy="5.500" r="4.500" fill="none" stroke="#9a9a9a"/><path d="M3.500 3.500l4 4M7.500 3.500l-4 4" stroke="#9a9a9a" stroke-width="0.9" fill="none" /></svg>
<span style="left:335.00px;top:732.70px;font-size:9px;line-height:12.6px;color:#989898;">0</span>
<svg style="left:343px;top:733.5px;" width="11" height="11" viewBox="0 0 11 11"><path d="M5.500 1.300l4.700 8.400h-9.400zM5.500 4.200v2.800M5.500 7.800v1" stroke="#9a9a9a" stroke-width="0.9" fill="none" /></svg>
<span style="left:356.00px;top:732.70px;font-size:9px;line-height:12.6px;color:#989898;">0</span>
<span class="h" style="left:676.25px;top:732.70px;font-size:9px;line-height:12.6px;color:#989898;">行</span>
<span style="left:685.45px;top:732.70px;font-size:9px;line-height:12.6px;color:#989898;letter-spacing:-0.05px;"> 22054, </span>
<span class="h" style="left:717.83px;top:732.70px;font-size:9px;line-height:12.6px;color:#989898;">列</span>
<span style="left:727.03px;top:732.70px;font-size:9px;line-height:12.6px;color:#989898;letter-spacing:-0.05px;"> 146</span>
<span class="h" style="left:759.00px;top:732.70px;font-size:9px;line-height:12.6px;color:#989898;">空格</span>
<span style="left:777.00px;top:732.70px;font-size:9px;line-height:12.6px;color:#989898;">: 2</span>
<span style="left:798.00px;top:732.70px;font-size:9px;line-height:12.6px;color:#989898;letter-spacing:-0.2px;">UTF-8</span>
<span style="left:833.50px;top:732.70px;font-size:9px;line-height:12.6px;color:#989898;">LF</span>
<span style="left:854.00px;top:732.70px;font-size:9px;line-height:12.6px;color:#989898;letter-spacing:-0.2px;">JavaScript</span>
</div></body></html>
